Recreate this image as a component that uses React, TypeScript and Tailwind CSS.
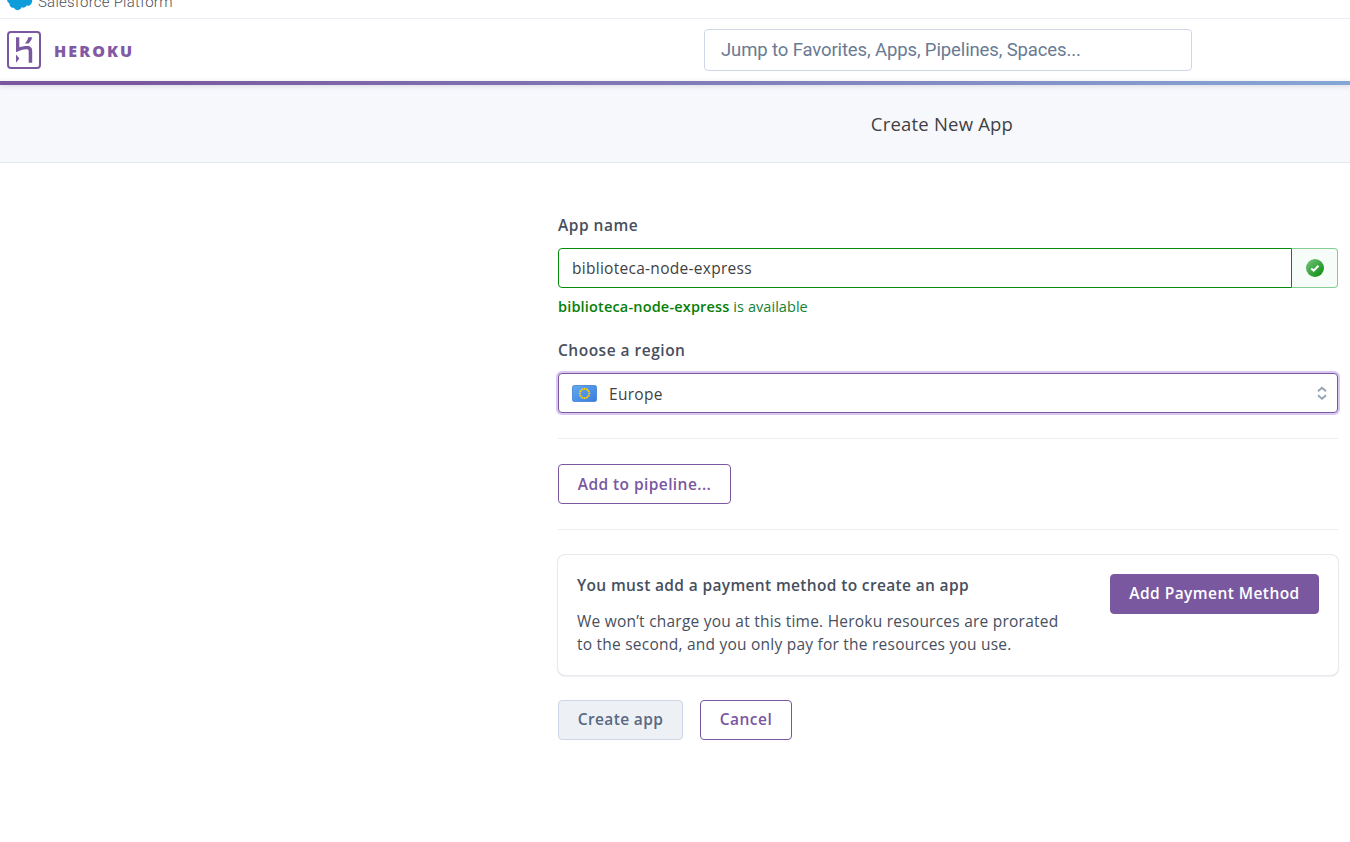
import type { ReactNode } from 'react';

function CloudLogo() {
  return (
    <svg width="26" height="19" viewBox="0 0 26 19" className="shrink-0" aria-hidden="true">
      <path
        fill="#0d9dda"
        d="M10.800 2.200C11.700 1.200 13 .7 14.300 .7c1.800 0 3.400 1 4.200 2.500a5.800 5.800 0 0 1 2.300-.5c2.600 0 4.400 2.300 4.400 5.200s-2 5.300-4.400 5.300c-.4 0-.8 0-1.100-.1a3.900 3.900 0 0 1-5 1.700 4.300 4.300 0 0 1-7.900.5A4.100 4.100 0 0 1 2.400 11 4.700 4.700 0 0 1 0 6.900C0 3.200 2.600 1 5.300 1c1.600 0 3 .5 5.500 1.200Z"
        transform="translate(0 .5)"
      />
    </svg>
  );
}

function HerokuMark() {
  return (
    <svg width="34" height="38" viewBox="0 0 34 38" className="shrink-0" fill="#79589f" aria-hidden="true">
      <rect x="1" y="1" width="32" height="36" rx="3" fill="none" stroke="#79589f" strokeWidth="2" />
      <path d="M9 6.300h3.300v10c2.200-.8 4.900-1.400 7.700-1.400 3.700 0 5.200 2 5.200 5.100v11.700h-3.500V20.300c0-1.500-.6-2.100-2.300-2.100-3.700 0-7.400 1.700-10.400 3Z" />
      <path d="M21.300 6.300h3.900c-.5 2.300-1.700 4.400-3.600 6.200h-3.700c1.700-1.900 2.900-3.900 3.400-6.200Z" />
      <path d="m9 23.400 3.400 4.100L9 31.700Z" />
    </svg>
  );
}

function EuropeFlag() {
  const stars = Array.from({ length: 12 }, (_, i) => {
    const a = (i * Math.PI) / 6;
    return <circle key={i} cx={12.5 + 4.7 * Math.cos(a)} cy={8.5 + 4.7 * Math.sin(a)} r="1.1" fill="#f5cd21" />;
  });
  return (
    <svg width="25" height="17" viewBox="0 0 25 17" className="shrink-0" aria-hidden="true">
      <defs>
        <linearGradient id="flag" x1="0" y1="0" x2="1" y2="1">
          <stop offset="0" stopColor="#62aaf0" />
          <stop offset="1" stopColor="#3a7be0" />
        </linearGradient>
      </defs>
      <rect x=".5" y=".5" width="24" height="16" rx="1.8" fill="url(#flag)" stroke="#3c7fd0" strokeOpacity=".8" />
      {stars}
    </svg>
  );
}

function CheckBadge() {
  return (
    <svg width="18" height="18" viewBox="0 0 18 18" aria-hidden="true">
      <defs>
        <linearGradient id="check" x1="0" y1="0" x2="1" y2="1">
          <stop offset="0" stopColor="#7cc47f" />
          <stop offset="1" stopColor="#048a0b" />
        </linearGradient>
      </defs>
      <circle cx="9" cy="9" r="9" fill="url(#check)" />
      <path d="M5.300 9.500 7.700 11.700 12.500 6.800" fill="none" stroke="#fff" strokeWidth="2" />
    </svg>
  );
}

function SelectArrows() {
  return (
    <svg width="10" height="14" viewBox="0 0 10 14" fill="none" stroke="#96a3b6" strokeWidth="1.9" aria-hidden="true">
      <path d="M1 5.300 5 1.800 9 5.300M1 9.300l4 3.500 4-3.500" />
    </svg>
  );
}

function Label({ children }: { children: ReactNode }) {
  return <label className="block h-5 text-[15.5px] leading-[18px] font-semibold tracking-[0.5px] text-[#474f5e]">{children}</label>;
}

const button = 'h-10 rounded-[4px] border text-[15.5px] font-semibold';

export default function App() {
  return (
    <div className="h-[842px] w-[1350px] overflow-hidden bg-white font-['Open_Sans','Noto_Sans',sans-serif] text-[#3f3f44]">
      <div className="flex h-[19px] items-end overflow-hidden border-b border-[#ececf6] pb-[7px] pl-[7px]">
        <CloudLogo />
        <span className="ml-[5px] font-['Roboto',sans-serif] text-[15px] leading-[18px] font-light tracking-[0.23px] text-[#4c5058]">
          Salesforce Platform
        </span>
      </div>

      <header className="flex h-[62px] items-center pl-[7px]">
        <HerokuMark />
        <span className="mt-[2px] ml-[13px] w-[80px] text-[16px] leading-6 font-extrabold tracking-[2.1px] whitespace-nowrap text-[#8159a5]">HEROKU</span>
        <input
          className="ml-[570px] h-[42px] w-[488px] rounded-[4px] border border-[#cfd7e6] bg-white px-4 font-['Roboto',sans-serif] text-[18.5px] tracking-[-0.12px] placeholder:text-[#6a7a93] placeholder:opacity-100"
          placeholder="Jump to Favorites, Apps, Pipelines, Spaces..."
        />
      </header>
      <div className="relative h-1 bg-linear-to-r from-[#79589f] from-10% to-[#85a7d5] shadow-[0_1px_5px_rgba(60,60,90,0.18)]" />

      <div className="flex h-[78px] items-center justify-center border-b border-[#e3e7ef] bg-[#f7f8fc] pl-[534px]">
        <h1 className="text-[18.5px] leading-6 tracking-[0.2px] text-[#3f3f44]">Create New App</h1>
      </div>

      <main className="ml-[558px] flex w-[780px] flex-col pt-[53px]">
        <Label>App name</Label>
        <div className="mt-[12px] flex h-10">
          <input
            className="h-10 w-[734px] rounded-l-[4px] border border-[#058a0c] px-[13px] pb-px text-[15.5px] tracking-[0.28px] text-[#3f3f44] outline-none"
            defaultValue="biblioteca-node-express"
          />
          <div className="flex h-10 w-[46px] items-center justify-center rounded-r-[4px] border border-l-0 border-[#85cd94] bg-[#f6fcf8]">
            <CheckBadge />
          </div>
        </div>
        <p className="mt-[9px] h-5 text-[14.5px] leading-5 whitespace-nowrap text-[#128236]">
          <b className="font-semibold tracking-[0.17px] text-[#068009]">biblioteca-node-express</b>
          <span className="tracking-[0.06px]"> is available</span>
        </p>

        <div className="mt-[24px]">
          <Label>Choose a region</Label>
        </div>
        <button className="mt-[12px] flex h-10 items-center rounded-[4px] border border-[#79589f] bg-white pr-[10px] pl-[13px] shadow-[0_0_0_2px_#d9c8ef]">
          <EuropeFlag />
          <span className="mt-px ml-3 grow text-left text-[15.5px] leading-6 tracking-[0.3px]">Europe</span>
          <SelectArrows />
        </button>

        <hr className="mt-[25px] border-[#eeeef2]" />
        <button className={button + ' mt-[25px] w-[173px] border-[#79589f] pt-0.5 tracking-[0.42px] text-[#79589f]'}>Add to pipeline...</button>
        <hr className="mt-[25px] border-[#eeeef2]" />

        <section className="mt-[25px] flex h-[120px] justify-between rounded-[7px] pt-[19px] pr-[19px] pl-[19px] shadow-[0_0_0_1px_#e9eaef,0_1px_2px_rgba(60,70,90,0.25)]">
          <div>
            <h2 className="h-6 text-[15.5px] leading-[23px] font-semibold tracking-[0.35px] text-[#474f5e]">You must add a payment method to create an app</h2>
            <p className="mt-3 text-[15.5px] leading-[23px] tracking-[0.23px] whitespace-nowrap text-[#474f5e]">
              We won’t charge you at this time. Heroku resources are prorated
              <br />
              to the second, and you only pay for the resources you use.
            </p>
          </div>
          <button className={button + ' w-[209px] border-[#79589f] bg-[#79589f] tracking-[0.44px] text-white'}>Add Payment Method</button>
        </section>

        <div className="mt-[25px] flex gap-[17px]">
          <button className={button + ' w-[125px] border-[#cfd7e6] bg-[#edf1f6] tracking-[0.36px] text-[#596981]'}>Create app</button>
          <button className={button + ' w-[92px] border-[#79589f] tracking-[0.45px] text-[#79589f]'}>Cancel</button>
        </div>
      </main>
    </div>
  );
}
